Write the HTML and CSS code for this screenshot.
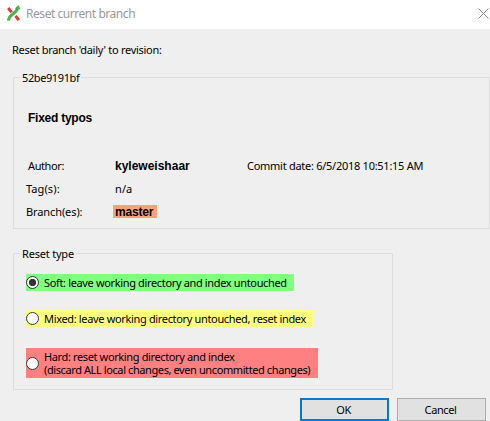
FILE: index.html
```html
<!DOCTYPE html>
<html lang="en">
<head>
<meta charset="utf-8">
<title>Reset current branch</title>
<link rel="stylesheet" href="styles.css">
</head>
<body>
<header class="titlebar">
  <svg class="logo" width="14" height="16" viewBox="0 0 14 16" fill="none" stroke-width="3">
    <path d="M1.2 3 4.6 7.4M8.6 10.8 11.8 15.2" stroke="#e03c32"/>
    <path d="M1.3 15.6C2 11.5 4.2 10.2 6.2 8.8S10 6 10.6 3" stroke="#4caf50"/>
    <path d="M7.8 3.6 11.4 0 13.6 4.6Z" fill="#4caf50"/>
  </svg>
  <h1 class="title"><span>Reset current branch</span></h1>
  <svg class="close" width="11" height="11" viewBox="0 0 11 11" stroke="#858585" stroke-width="1"><path d="M.5 .5l10 10M10.5 .5l-10 10"/></svg>
</header>
<main class="content">
  <p class="intro"><span>Reset branch 'daily' to revision:</span></p>
  <fieldset class="group revision">
    <legend><span class="sha">52be9191bf</span></legend>
    <p class="subject"><span>Fixed typos</span></p>
    <div class="details">
      <span class="label author">Author:</span><b class="name">kyleweishaar</b><span class="date">Commit date: 6/5/2018 10:51:15 AM</span>
      <span class="label tags">Tag(s):</span><span class="none">n/a</span><span></span>
      <span class="label branches">Branch(es):</span><b class="branch">master</b><span></span>
    </div>
  </fieldset>
  <fieldset class="group types">
    <legend class="type-legend"><span>Reset type</span></legend>
    <label class="option soft"><i class="radio checked"></i><span class="text">Soft: leave working directory and index untouched</span></label>
    <label class="option mixed"><i class="radio"></i><span class="text">Mixed: leave working directory untouched, reset index</span></label>
    <label class="option hard"><i class="radio"></i><span class="text"><span class="hard-1">Hard: reset working directory and index</span><span class="hard-2">(discard ALL local changes, even uncommitted changes)</span></span></label>
  </fieldset>
  <footer class="actions">
    <button class="button primary">OK</button>
    <button class="button">Cancel</button>
  </footer>
</main>
</body>
</html>
```
FILE: styles.css
```css
* { box-sizing: border-box; }
body {
  margin: 0;
  width: 490px;
  height: 421px;
  overflow: hidden;
  background: #efefef;
  color: #000;
  font: 11px/13px "Noto Sans", "Open Sans", sans-serif;
  white-space: nowrap;
}
p, h1 { margin: 0; }
.titlebar {
  display: flex;
  height: 29px;
  padding-left: 7px;
  background: #fff;
}
.logo { margin-top: 5px; flex: none; }
.title {
  flex: 1;
  margin: 5px 0 0 5px;
  font-size: 12px;
  line-height: 18px;
  font-weight: 400;
  color: #999;
  letter-spacing: -.45px;
}
.close { margin: 8px 1px 0 0; flex: none; }
.content { display: flex; flex-direction: column; }
.intro { height: 40px; padding: 14px 0 0 12px; letter-spacing: -.28px; }
.group {
  min-width: 0;
  margin: 0 0 0 13px;
  padding: 0;
  border: 1px solid #dcdcdc;
}
legend {
  height: 17px;
  margin-left: 6px;
  padding: 2px 2px 0;
  letter-spacing: -.4px;
}
.type-legend { letter-spacing: -.2px; }
.revision { width: 477px; height: 160px; }
.subject {
  padding: 24px 0 0 14px;
  height: 73px;
  font: bold 12px/16px "Liberation Sans", sans-serif;
  letter-spacing: -.25px;
}
.details {
  display: grid;
  grid-template-columns: 87px 134px 1fr;
  grid-template-rows: repeat(3, 23px);
  align-items: center;
  justify-items: start;
  padding-left: 12px;
  margin-top: -5px;
  letter-spacing: -.4px;
}
.author { padding-left: 2px; }
.tags { letter-spacing: .1px; }
.branches { letter-spacing: -.1px; }
.date { letter-spacing: -.27px; }
.name, .branch {
  padding: 1px 2px 0;
  font: bold 12px/13px "Liberation Sans", sans-serif;
  letter-spacing: 0;
}
.none { padding-left: 2px; letter-spacing: .1px; }
.branch {
  width: 44px;
  height: 13px;
  line-height: 12px;
  background: #ffa07a;
  letter-spacing: -.2px;
}
.types {
  display: flex;
  flex-direction: column;
  align-items: flex-start;
  width: 380px;
  height: 145px;
  margin-top: 16px;
}
.option {
  display: flex;
  align-items: center;
  margin-left: 12px;
}
.soft { width: 268px; height: 17px; margin-top: 12px; background: #80ff80; letter-spacing: -.35px; }
.mixed { width: 287px; height: 17px; margin-top: 19px; background: #ffff80; letter-spacing: -.34px; }
.hard { width: 292px; height: 30px; margin-top: 21px; background: #ff8080; letter-spacing: -.4px; }
.hard-1, .hard-2 { display: block; }
.hard-1 { letter-spacing: -.37px; }
.radio {
  flex: none;
  width: 13px;
  height: 13px;
  margin-right: 5px;
  border: 1px solid #333;
  border-radius: 50%;
  background: #fff;
}
.checked { background: radial-gradient(circle, #333 3.3px, #fff 4px); }
.actions {
  display: flex;
  gap: 8px;
  margin: 8px 0 0 300px;
}
.button {
  width: 89px;
  height: 23px;
  padding: 0 2px 0 0;
  border: 1px solid #adadad;
  background: #e1e1e1;
  font: inherit;
  letter-spacing: -.4px;
}
.primary { border: 2px solid #0078d7; }
```
